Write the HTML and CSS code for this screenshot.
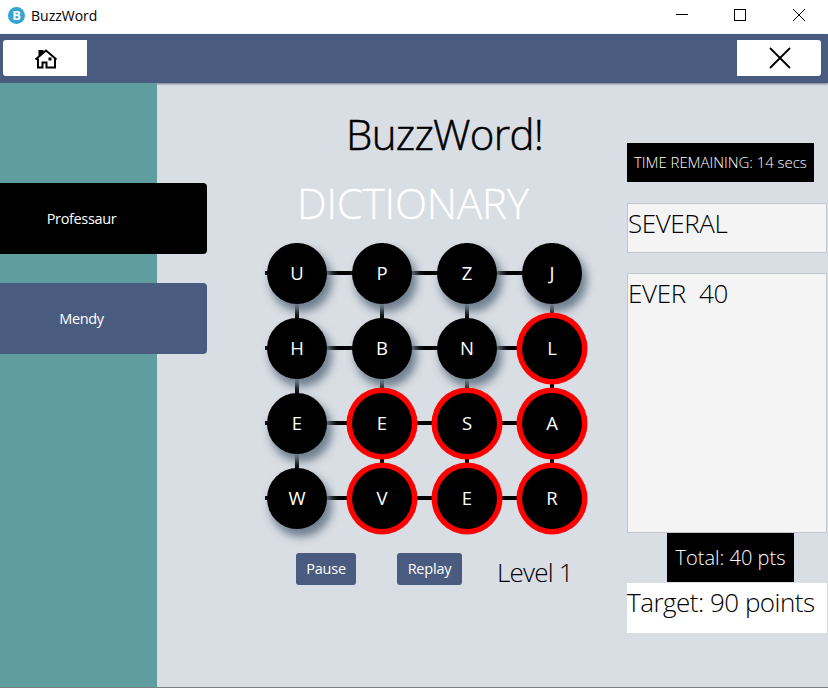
FILE: index.html
```html
<!DOCTYPE html>
<html lang="en">
<head>
<meta charset="utf-8">
<title>BuzzWord</title>
<link rel="stylesheet" href="styles.css">
</head>
<body>
<header class="titlebar">
  <span class="app-icon">B</span>
  <span class="app-name">BuzzWord</span>
  <svg class="window-controls" width="134" height="14" viewBox="0 0 134 14" fill="none" stroke="#000">
    <path d="M0 6.500h12M58.500 1.500h11v11h-11z" shape-rendering="crispEdges"/>
    <path d="M117 1l12 12M129 1l-12 12"/>
  </svg>
</header>
<nav class="toolbar">
  <button class="tool tool-home" aria-label="Home">
    <svg width="24" height="20" viewBox="0 0 24 20">
      <path d="M4.500 1h5v3l-5 4z"/>
      <path d="M1.500 10.500L12 1.500l10.500 9M4 9.500v9h4.500v-5h4v5H21v-9" fill="none" stroke="#000" stroke-width="2"/>
      <path d="M14.500 8.500h3v3h-3z"/>
    </svg>
  </button>
  <button class="tool tool-close" aria-label="Close">
    <svg width="24" height="24" viewBox="0 0 24 24" fill="none" stroke="#000" stroke-width="1.800"><path d="M2 2l20 20M22 2L2 22"/></svg>
  </button>
</nav>
<main class="content">
  <aside class="sidebar">
    <button class="side-button user"><span>Professaur</span></button>
    <button class="side-button author"><span>Mendy</span></button>
  </aside>
  <section class="game">
    <h1 class="title">BuzzWord!</h1>
    <h2 class="mode">DICTIONARY</h2>
    <div class="board">
      <span class="node">U</span><span class="node">P</span><span class="node">Z</span><span class="node">J</span>
      <span class="node">H</span><span class="node">B</span><span class="node">N</span><span class="node picked">L</span>
      <span class="node">E</span><span class="node picked">E</span><span class="node picked">S</span><span class="node picked">A</span>
      <span class="node">W</span><span class="node picked">V</span><span class="node picked">E</span><span class="node picked">R</span>
    </div>
    <div class="controls">
      <button class="action pause">Pause</button>
      <button class="action replay">Replay</button>
      <span class="level">Level 1</span>
    </div>
  </section>
  <section class="stats">
    <div class="timer">TIME REMAINING: 14 secs</div>
    <div class="guess"><span>SEVERAL</span></div>
    <div class="words"><span class="found">EVER&nbsp; 40</span></div>
    <div class="total">Total: 40 pts</div>
    <div class="target"><span>Target: 90 points</span></div>
  </section>
</main>
</body>
</html>
```
FILE: styles.css
```css
* { box-sizing: border-box; }
body {
  margin: 0;
  width: 828px;
  height: 688px;
  overflow: hidden;
  display: flex;
  flex-direction: column;
  background: #d9dde4;
  color: #000;
  font-family: "Open Sans", "Noto Sans", sans-serif;
}
button { border: 0; padding: 0; font: inherit; color: inherit; }
.titlebar {
  flex: 0 0 34px;
  display: flex;
  align-items: center;
  padding: 0 18px 4px 8px;
  background: #fff;
}
.app-icon {
  width: 17px;
  height: 17px;
  border-radius: 50%;
  background: #32a5d0;
  color: #fff;
  font: 700 13px/17px "Open Sans", sans-serif;
  text-align: center;
}
.app-name { margin-left: 6px; font-size: 14px; }
.window-controls { margin-left: auto; }
.toolbar {
  flex: 0 0 49px;
  display: flex;
  justify-content: space-between;
  align-items: flex-start;
  padding: 6px 7px 0 3px;
  background: #495c7f;
  box-shadow: 0 1px 2px #77777a;
}
.tool {
  width: 84px;
  height: 36px;
  background: #fff;
  display: flex;
  align-items: center;
  justify-content: center;
}
.tool-home { border-radius: 3px 0 0 3px; padding: 1px 0 0 1px; }
.tool-close { border-radius: 0 3px 3px 0; padding: 0 0 0 2px; }
.content {
  flex: 1;
  display: flex;
  border-bottom: 1px solid #777c82;
}
.sidebar {
  flex: 0 0 157px;
  min-width: 0;
  width: 157px;
  display: flex;
  flex-direction: column;
  gap: 29px;
  padding-top: 100px;
  background: #609d9f;
}
.side-button {
  width: 207px;
  height: 71px;
  border-radius: 0 4px 4px 0;
  color: #fff;
  font-size: 14.5px;
  letter-spacing: -0.35px;
  padding: 0 44px 1px 0;
}
.user { background: #000; }
.author { background: #495c7f; }
.game {
  flex: 0 0 470px;
  display: flex;
  flex-direction: column;
}
.title, .mode {
  margin: 0;
  font-weight: 300;
  font-size: 42px;
  line-height: 58px;
  white-space: nowrap;
}
.title { margin: 22px 0 0 189px; letter-spacing: -0.700px; -webkit-text-stroke: 0.5px #000; }
.mode { margin: 11px 0 0 140px; color: #fff; letter-spacing: -0.200px; -webkit-text-stroke: 0.3px #fff; }
.board {
  width: 317px;
  margin: 11px 0 0 108px;
  padding-left: 2px;
  display: grid;
  grid-template-columns: repeat(4, 60px);
  grid-auto-rows: 61px;
  gap: 14px 25px;
  background:
    linear-gradient(#000, #000) 0 28px / 287px 4px no-repeat,
    linear-gradient(#000, #000) 0 103px / 287px 4px no-repeat,
    linear-gradient(#000, #000) 0 178px / 287px 4px no-repeat,
    linear-gradient(#000, #000) 0 253px / 287px 4px no-repeat,
    linear-gradient(#000, #000) 30px 0 / 4px 255px no-repeat,
    linear-gradient(#000, #000) 115px 0 / 4px 255px no-repeat,
    linear-gradient(#000, #000) 200px 0 / 4px 255px no-repeat,
    linear-gradient(#000, #000) 285px 0 / 4px 255px no-repeat;
}
.node {
  display: flex;
  align-items: center;
  justify-content: center;
  padding-bottom: 2px;
  border-radius: 50%;
  background: #000;
  color: #fff;
  font-size: 18.5px;
  box-shadow: 4px 7px 8px 1px #708090;
}
.picked { box-shadow: 0 0 0 5.5px #f00; }
.controls {
  display: flex;
  align-items: flex-start;
  margin: 24px 0 0 139px;
}
.action {
  border-radius: 3px;
  background: #495c7f;
  color: #fff;
  font-size: 14.5px;
  letter-spacing: -0.2px;
  height: 32px;
  padding-bottom: 1px;
}
.pause { width: 60px; }
.replay { width: 65px; margin-left: 41px; }
.level {
  margin-left: 35px;
  font-size: 26px;
  font-weight: 300;
  line-height: 38px;
  letter-spacing: -0.800px;
}
.stats {
  flex: 0 0 200px;
  display: flex;
  flex-direction: column;
  font-weight: 300;
  font-size: 26px;
  line-height: 38px;
  white-space: nowrap;
}
.timer {
  width: 187px;
  height: 39px;
  margin-top: 60px;
  padding-left: 7px;
  background: #000;
  color: #fff;
  font-size: 15px;
  letter-spacing: -0.050px;
}
.guess, .words {
  background: #f4f4f4;
  border: 1px solid #c3c6ca;
}
.guess { height: 50px; margin-top: 21px; letter-spacing: -0.400px; }
.words { height: 260px; margin-top: 20px; letter-spacing: -0.300px; }
.total {
  width: 127px;
  height: 49px;
  margin-left: 40px;
  background: #000;
  color: #fff;
  font-size: 20px;
  line-height: 49px;
  text-align: center;
}
.target { height: 50px; margin-top: 1px; background: #fff; letter-spacing: -0.5px; }
```
